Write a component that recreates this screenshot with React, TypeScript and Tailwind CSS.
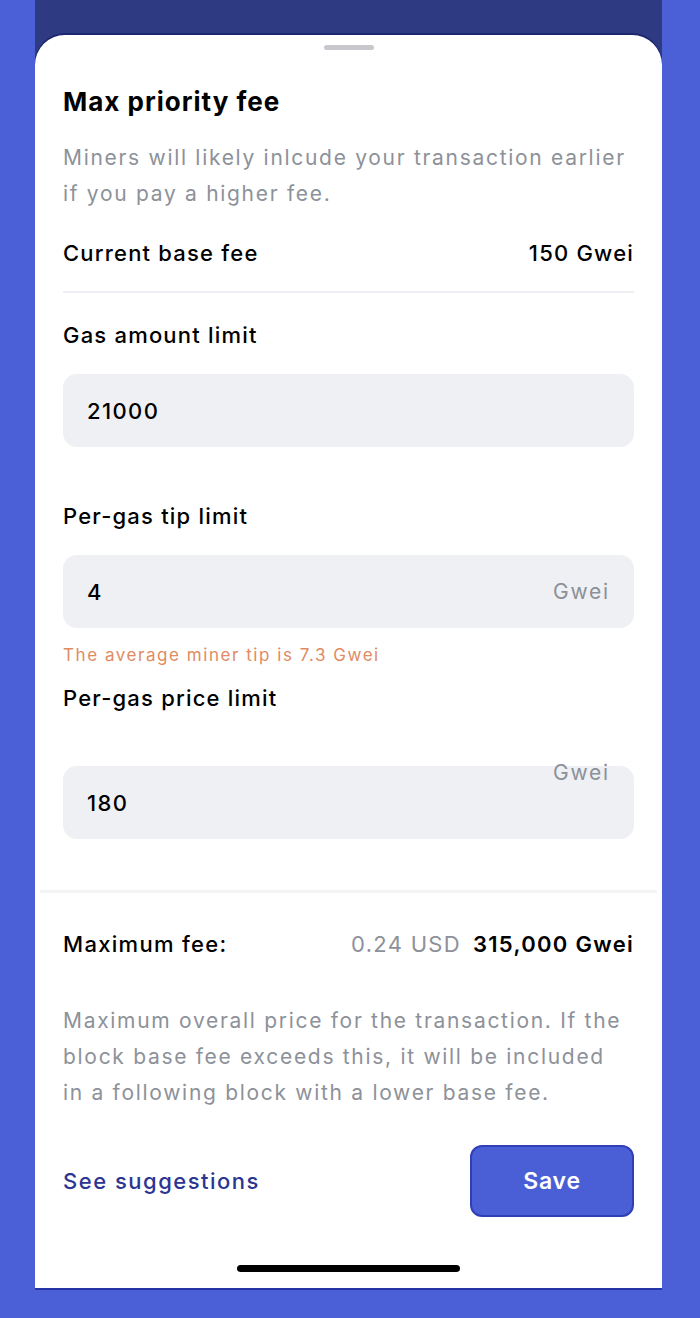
import React from "react";

const font = { fontFamily: "Inter, 'Noto Sans', sans-serif" };

function Field({
  value,
  unit,
  unitHigh,
  className = "mt-[24px]",
}: {
  value: string;
  unit?: string;
  unitHigh?: boolean;
  className?: string;
}) {
  return (
    <div className={`relative h-[73px] rounded-[14px] bg-[#eef0f3] pl-[24px] pr-[24px] flex items-center ${className}`}>
      <span className="text-[22px] font-medium tracking-[1.4px] text-black leading-[30px]">{value}</span>
      {unit && !unitHigh && (
        <span className="ml-auto text-[21px] tracking-[1.8px] text-[#8b9099] leading-[30px]">{unit}</span>
      )}
      {unit && unitHigh && (
        <span className="absolute right-[24px] top-[-5px] text-[21px] tracking-[1.8px] text-[#8b9099] leading-[24px]">
          {unit}
        </span>
      )}
    </div>
  );
}

export default function App() {
  return (
    <div className="h-[1318px] w-[700px] bg-[#4b5fd6] pl-[35px] pr-[38px]" style={font}>
      <div className="bg-[#2e3a82] pt-[35px]">
        {/* Sheet */}
        <div className="flex flex-col rounded-t-[30px] bg-white border-b-2 border-[#2535a8] pb-[16px] shadow-[0_-2px_0_#1c2770]">
          {/* Grab handle */}
          <div className="mx-auto mt-[10px] h-[5px] w-[50px] rounded-full bg-[#c6c8ce]" />

          <div className="px-[28px]">
            <h1 className="mt-[37px] text-[26px] font-bold tracking-[1px] leading-[30px] text-black">
              Max priority fee
            </h1>
            <p className="mt-[23px] text-[21px] tracking-[1.7px] leading-[36px] text-[#8d9199]">
              Miners will likely inlcude your transaction earlier
              <br />
              if you pay a higher fee.
            </p>

            <div className="mt-[26px] flex items-center justify-between text-[22px] font-medium tracking-[1.2px] leading-[30px] text-black">
              <span>Current base fee</span>
              <span>150 Gwei</span>
            </div>
            <div className="mt-[23px] h-[2px] bg-[#eeeff2]" />

            <div className="mt-[27px] text-[22px] font-medium tracking-[1.2px] leading-[30px] text-black">
              Gas amount limit
            </div>
            <Field value="21000" />

            <div className="mt-[54px] text-[22px] font-medium tracking-[1.2px] leading-[30px] text-black">
              Per-gas tip limit
            </div>
            <Field value="4" unit="Gwei" />
            <div className="mt-[15px] text-[17px] tracking-[1.55px] leading-[24px] text-[#e08b64]">
              The average miner tip is 7.3 Gwei
            </div>

            <div className="mt-[16px] text-[22px] font-medium tracking-[1.2px] leading-[30px] text-black">
              Per-gas price limit
            </div>
            <Field value="180" unit="Gwei" unitHigh className="mt-[53px]" />
          </div>

          <div className="mx-[5px] mt-[51px] h-[3px] bg-[#f3f4f6]" />

          <div className="px-[28px]">
            <div className="mt-[36px] flex items-center text-[22px] tracking-[1.3px] leading-[30px]">
              <span className="font-medium text-black">Maximum fee:</span>
              <span className="ml-auto text-[#8d9199]">0.24 USD</span>
              <span className="ml-[12px] font-semibold text-black">315,000 Gwei</span>
            </div>
            <p className="mt-[44px] text-[21px] tracking-[1.7px] leading-[36px] text-[#8d9199]">
              Maximum overall price for the transaction. If the
              <br />
              block base fee exceeds this, it will be included
              <br />
              in a following block with a lower base fee.
            </p>

            <div className="mt-[34px] flex items-center justify-between">
              <button className="text-[22px] font-medium tracking-[1.5px] leading-[30px] text-[#2b3592]">
                See suggestions
              </button>
              <button className="h-[72px] w-[164px] rounded-[12px] border-2 border-[#2f3fb6] bg-[#4a5fd6] text-[23px] font-semibold tracking-[0.8px] text-white">
                Save
              </button>
            </div>
          </div>

          {/* Home indicator */}
          <div className="mx-auto mt-[48px] h-[7px] w-[223px] rounded-full bg-black" />
        </div>
      </div>
    </div>
  );
}
